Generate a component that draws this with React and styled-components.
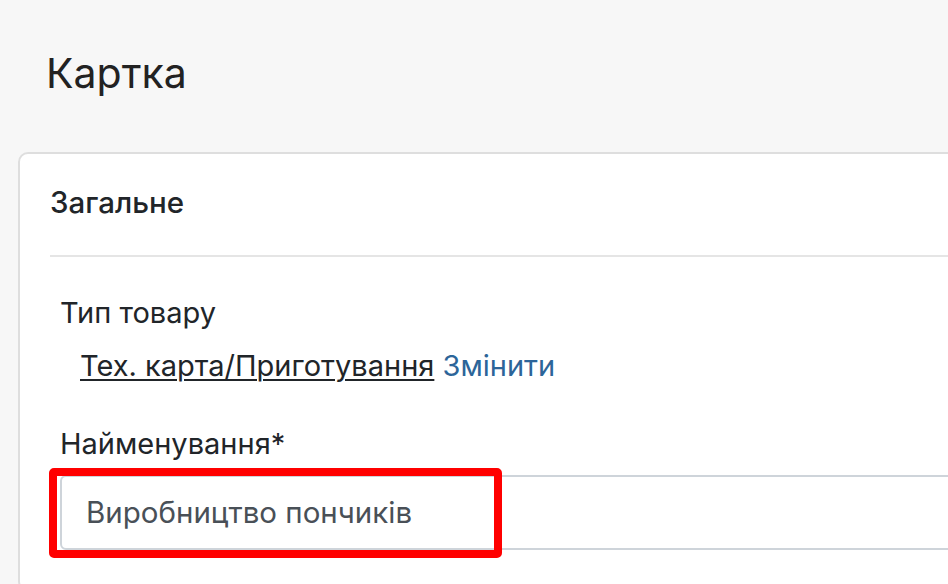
import React from "react";
import styled, { createGlobalStyle } from "styled-components";

const GlobalStyle = createGlobalStyle`
  html, body {
    margin: 0;
    padding: 0;
    background: #f7f7f7;
    overflow: hidden;
  }
  body {
    font-family: Inter, "Noto Sans", "Liberation Sans", sans-serif;
    color: #212529;
  }
`;

const Page = styled.div`
  width: 1200px;
  padding: 49px 0 0 18px;
`;

const PageTitle = styled.h1`
  margin: 0 0 54px 28px;
  font-size: 41px;
  line-height: 1.2;
  font-weight: 400;
  color: #222;
`;

const Card = styled.section`
  width: 1100px;
  background: #fff;
  border: 2px solid #dedede;
  border-radius: 10px;
`;

const CardHeader = styled.div`
  margin: 0 30px;
  padding: 31px 0 34px;
  border-bottom: 2px solid #e5e5e5;
  font-size: 29.5px;
  line-height: 1.2;
  font-weight: 500;
`;

const CardBody = styled.div`
  padding: 39px 40px 40px;
`;

const Label = styled.div`
  font-size: 29px;
  line-height: 1.2;
  margin-top: ${(p) => p.gap || 0}px;
`;

const TypeRow = styled.div`
  margin: 19px 0 0 20px;
  font-size: 29px;
  line-height: 1.2;
`;

const TypeName = styled.span`
  text-decoration: underline;
  text-underline-offset: 3px;
  text-decoration-thickness: 2px;
`;

const ChangeLink = styled.a`
  color: #2c6599;
  text-decoration: none;
  cursor: pointer;
`;

const InputWrap = styled.div`
  position: relative;
  margin-top: 13px;
`;

const Input = styled.input`
  box-sizing: border-box;
  width: 100%;
  height: 75px;
  padding: 0 24px;
  border: 2px solid #ced4da;
  border-radius: 6px;
  font-family: inherit;
  font-size: 29.5px;
  line-height: 1.2;
  color: #495057;
  background: #fff;
  outline: none;
`;

const Highlight = styled.div`
  position: absolute;
  left: -11px;
  top: -7px;
  width: 453px;
  height: 90px;
  box-sizing: border-box;
  border: 8px solid #ff0000;
  border-radius: 5px;
  pointer-events: none;
`;

export default function App() {
  return (
    <>
      <GlobalStyle />
      <Page>
        <PageTitle>Картка</PageTitle>
        <Card>
          <CardHeader>Загальне</CardHeader>
          <CardBody>
            <Label>Тип товару</Label>
            <TypeRow>
              <TypeName>Тех. карта/Приготування</TypeName>{" "}
              <ChangeLink>Змінити</ChangeLink>
            </TypeRow>
            <Label gap={43}>Найменування*</Label>
            <InputWrap>
              <Input defaultValue="Виробництво пончиків" readOnly />
              <Highlight />
            </InputWrap>
          </CardBody>
        </Card>
      </Page>
    </>
  );
}
